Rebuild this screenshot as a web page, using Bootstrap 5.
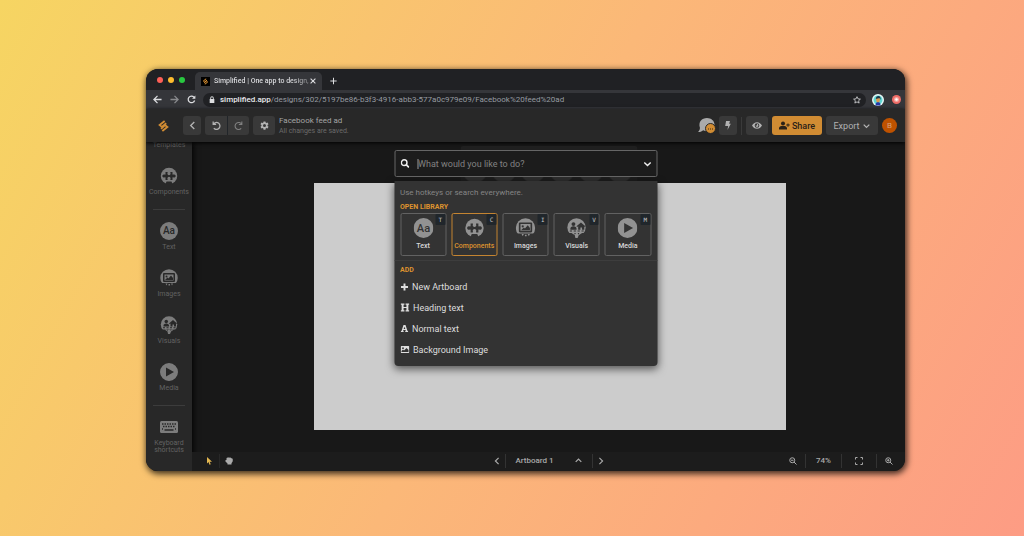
<!DOCTYPE html>
<html lang="en">
<head>
<meta charset="utf-8">
<meta name="viewport" content="width=device-width, initial-scale=1">
<title>Simplified | One app to design</title>
<link href="https://cdn.jsdelivr.net/npm/bootstrap@5.3.0/dist/css/bootstrap.min.css" rel="stylesheet">
<style>
  body { font-family: Roboto, "Liberation Sans", sans-serif; font-size: 8px; line-height: 10px; color: #a8a8a8;
    min-height: 100vh; padding: 69px 119px 66px 146px;
    background: linear-gradient(118deg, #f6d562 0%, #fbb878 50%, #fd9c84 100%); }
  svg { display: block; fill: currentColor; flex: none; }
  button { border: 0; padding: 0; background: none; color: inherit; font: inherit; display: flex; align-items: center; justify-content: center; }
  .browser { background: #181818; border-radius: 12px; box-shadow: 1px 2px 6px 1px rgba(0,0,0,.75); }
  .browser-clip { border-radius: 12px; overflow: hidden; }
  .tabs { background: #202124; height: 21px; padding-left: 11px; color: #dcdde0; }
  .dot { width: 6px; height: 6px; border-radius: 50%; margin-right: 5px; }
  .site-tab { background: #35363a; height: 18px; width: 127px; border-radius: 5px 5px 0 0; margin-left: 5px; padding: 0 6px; font-size: 7px; font-weight: 500; }
  .site-tab .tab-title { margin-left: 4px; white-space: nowrap; background: linear-gradient(90deg, #e4e5e8 80%, #77787b 100%); -webkit-background-clip: text; background-clip: text; color: transparent; }
  .address-row { background: #35363a; height: 19px; padding: 0 4px 0 7px; color: #dcdde0; }
  .address { background: #202124; height: 14px; border-radius: 7px; margin: 0 6px 0 7px; padding: 0 5px 0 6px; }
  .address input { border: 0; background: none; color: #969ba1; padding: 0; outline: 0; }
  .address .host { color: #e8eaed; font-weight: 500; padding-left: 5px; }
  .topbar { background: #282828; height: 33px; padding: 0 8px 0 12px; position: relative; box-shadow: 0 1px 4px #000; z-index: 1; }
  .tool { background: #393939; height: 19px; border-radius: 3px; color: #b2b2b2; }
  .brand-gap { margin-left: 14px; }
  .w18 { width: 18px; } .w22 { width: 22px; }
  .vline { width: 1px; height: 18px; background: #3a3a3a; }
  .doc-title { font-size: 8px; color: #a4a4a4; }
  .doc-note { font-size: 7px; color: #6b6b6b; }
  .share { background: #d18c33; color: #2a2118; width: 50px; font-size: 9px; font-weight: 500; gap: 2px; }
  .export { width: 52px; font-size: 9px; gap: 4px; }
  .avatar { width: 15px; height: 15px; border-radius: 50%; background: #bf5200; color: #d8a27c; }
  .chat-badge { position: absolute; right: -1px; bottom: -1px; width: 11px; height: 11px; border-radius: 50%; background: #d18c33; color: #3b2810; border: 1px solid #282828; }
  .side { width: 46px; background: #282828; box-shadow: 1px 0 6px #000; gap: 18px; padding-bottom: 17px; --cut: #282828; }
  .side a { color: #7c7c7c; text-decoration: none; display: flex; flex-direction: column; align-items: center; gap: 4px; font-size: 7px; line-height: 7px; text-align: center; }
  .side a span { color: #626262; }
  .side hr { width: 32px; margin: -5px 0 -6px; border-color: #777; }
  .stage { padding: 41px 119px 22px 122px; }
  .artboard { background: #ccc; min-height: 247px; }
  .bottombar { background: #1c1c1c; height: 19px; display: grid; grid-template-columns: 1fr auto 1fr; align-items: center; padding: 0 12px 2px 13px; color: #aaa; font-weight: 500; }
  .bottombar .vline { height: 14px; background: #333; }
  .gap-tight { gap: 5px; }
  .page-name { padding: 0 6px 0 5px; gap: 21px; }
  .zoom-group { gap: 8px; }
  .zoom-group .roomy { padding: 0 5px; }
  .zoom-group .zoom-value { padding: 0 2px; }
  .palette { position: absolute; top: 81px; left: 50%; width: 263px; transform: translateX(-50%); z-index: 3; --cut: #333; }
  .ghost { position: absolute; top: -4px; left: 66px; right: 20px; height: 38px; border-radius: 3px; z-index: -1;
    background: radial-gradient(circle at 50% 0, #2d2d2d 12px, #1c1c1c 13px) 0 24px / 29px 16px repeat-x, #1f1f1f; }
  .search { background: #1c1c1c; border: 1px solid #666; border-radius: 2px; height: 27px; margin-bottom: 4px; padding: 0 5px; color: #eee; }
  .search input { background: none; border: 0; outline: 0; padding: 0; margin-left: 10px; color: #ddd; font-size: 9px; line-height: 12px; }
  .search input::placeholder { color: #828282; opacity: 1; }
  .caret-line { width: 1px; height: 10px; background: #999; margin: 0 -10px 0 8px; }
  .panel { background: #333; border-radius: 0 0 4px 4px; box-shadow: 0 3px 8px rgba(0,0,0,.6); padding: 7px 6px 6px; }
  .hint { color: #858585; margin: 0 0 5px; }
  .group-name { color: #dd922f; font-size: 7px; line-height: 8px; font-weight: 700; margin: 0 0 2px; }
  .tiles { display: grid; grid-template-columns: repeat(5, 1fr); gap: 5px; }
  .tile { position: relative; height: 43px; border: 1px solid #626262; border-radius: 2px; flex-direction: column; gap: 4px; color: #d8d8d8; font-size: 7px; line-height: 9px; font-weight: 500; }
  .tile svg { color: #929292; }
  .tile.picked { border: 1px solid #c48431; color: #dd922f; }
  .tile kbd { position: absolute; top: 0; right: 0; background: #20262b; color: #c8c8c8; font: 6px/11px "DejaVu Sans Mono", monospace; padding: 0 3px; border-radius: 1px; }
  .dotted { border-top: 1px dotted #484848; margin: 4px -6px 5px; }
  .cmd { height: 21px; gap: 4px; justify-content: flex-start; color: #dedede; font-size: 9px; width: 100%; }
</style>
</head>
<body class="d-flex flex-column">
<svg width="0" height="0" class="position-absolute" aria-hidden="true">
  <symbol id="i-logo" viewBox="0 0 24 28"><path d="M14.500 3 3.500 12l5 4 9.500-8M6.500 20l9-8 5 4-11 9" fill="none" stroke="currentColor" stroke-width="4"/></symbol>
  <symbol id="i-left" viewBox="0 0 10 10"><path d="M7 1 3 5l4 4" fill="none" stroke="currentColor" stroke-width="1.500"/></symbol>
  <symbol id="i-right" viewBox="0 0 10 10"><path d="m3 1 4 4-4 4" fill="none" stroke="currentColor" stroke-width="1.400"/></symbol>
  <symbol id="i-down" viewBox="0 0 10 10"><path d="m1 3 4 4 4-4" fill="none" stroke="currentColor" stroke-width="1.800"/></symbol>
  <symbol id="i-up" viewBox="0 0 10 10"><path d="m1 7 4-4 4 4" fill="none" stroke="currentColor" stroke-width="1.800"/></symbol>
  <symbol id="i-arrow" viewBox="0 0 10 10"><path d="M9.500 5H1M5 1 1 5l4 4" fill="none" stroke="currentColor" stroke-width="1.400"/></symbol>
  <symbol id="i-reload" viewBox="0 0 10 10"><path d="M8.500 6.200A3.700 3.700 0 1 1 7.700 2.300L8.500 3" fill="none" stroke="currentColor" stroke-width="1.400"/><path d="M9.300.5v3.700H5.600z"/></symbol>
  <symbol id="i-undo" viewBox="0 0 10 10"><path d="M1.300.5v3.300h3.300M1.500 3.600A3.900 3.900 0 1 1 2 8.100" fill="none" stroke="currentColor" stroke-width="1.400"/></symbol>
  <symbol id="i-redo" viewBox="0 0 10 10"><path d="M8.700.5v3.300H5.400M8.500 3.600A3.900 3.900 0 1 0 8 8.100" fill="none" stroke="currentColor" stroke-width="1.200"/></symbol>
  <symbol id="i-gear" viewBox="0 0 24 24"><path fill-rule="evenodd" d="M9.500 1h5l.6 3.300 2 1.100 3.100-1.200 2.500 4.300-2.500 2.100v2.800l2.500 2.100-2.500 4.300-3.100-1.200-2 1.100-.6 3.300h-5l-.6-3.300-2-1.100-3.100 1.200-2.500-4.300 2.500-2.100v-2.800L1.300 8.500l2.500-4.300 3.100 1.200 2-1.100zM12 8a4 4 0 1 0 0 8 4 4 0 0 0 0-8z"/></symbol>
  <symbol id="i-chat" viewBox="0 0 18 16"><path d="M9.500 0C14 0 17.500 3 17.500 7S14 14 9.500 14c-1.500 0-2.800-.3-4-.9C4 14.500 2 15 0 15c1.300-1.300 2-2.800 2-4.500C0 4 4 0 9.500 0z"/></symbol>
  <symbol id="i-bolt" viewBox="0 0 10 16"><path d="M1.500 0h7L7 5h3L4 16l1.300-7H0z"/></symbol>
  <symbol id="i-eye" viewBox="0 0 18 12"><path fill-rule="evenodd" d="M9 0c4 0 7 2.500 9 6-2 3.500-5 6-9 6S2 9.500 0 6c2-3.500 5-6 9-6zm0 1.800a4.200 4.200 0 1 0 0 8.400 4.200 4.200 0 0 0 0-8.400zM9 3.500A2.500 2.500 0 1 1 6.500 6L9 6z"/></symbol>
  <symbol id="i-userplus" viewBox="0 0 22 16"><circle cx="8" cy="4" r="4"/><path d="M0 16v-2c0-3 2-5 5-5h6c3 0 5 2 5 5v2zM17 4h2v2h2.500v2H19v2.500h-2V8h-2.500V6H17z"/></symbol>
  <symbol id="i-lock" viewBox="0 0 10 12"><path fill-rule="evenodd" d="M1 5h1V3.500a3 3 0 0 1 6 0V5h1v7H1zm2.500 0h3V3.500a1.500 1.500 0 0 0-3 0z"/></symbol>
  <symbol id="i-star" viewBox="0 0 12 12"><path d="m6 1 1.500 3.300 3.600.4-2.700 2.400.8 3.500L6 8.800l-3.200 1.800.8-3.500L.9 4.700l3.600-.4z" fill="none" stroke="currentColor" stroke-width="1.200"/></symbol>
  <symbol id="i-comp" viewBox="0 0 36 36"><circle cx="18" cy="18" r="16.500"/><g style="fill:var(--cut)"><path d="M10 36l3-7h10l3 7z"/><path d="M11 10h3.500c1 0 1 1 .5 2a3.200 3.200 0 1 0 6 0c-.5-1-.5-2 .5-2H25v4.500c0 1 1 1 2 .5a3.200 3.200 0 1 1 0 6c-1-.5-2-.5-2 .5V26h-3.500c-1 0-1-1-.5-2a3.200 3.200 0 1 0-6 0c.5 1 .5 2-.5 2H11v-4.500c0-1-1-1-2-.5a3.200 3.200 0 1 1 0-6c1 .5 2 .5 2-.5z"/></g></symbol>
  <symbol id="i-text" viewBox="0 0 36 36"><circle cx="18" cy="18" r="18"/><text x="18" y="24.500" text-anchor="middle" font-family="Roboto, sans-serif" font-weight="500" font-size="20" style="fill:var(--cut)">Aa</text></symbol>
  <symbol id="i-img" viewBox="0 0 36 36"><circle cx="18" cy="18" r="17.500"/><g style="fill:var(--cut)"><path fill-rule="evenodd" d="M8 8h20q2 0 2 2v14q0 2-2 2H8q-2 0-2-2V10q0-2 2-2zm1 3v12h18V11z"/><circle cx="13" cy="15" r="2"/><path d="m10 22 5-5 2 2 5-6 4 5v4zM3 28h30v8H3z"/></g><path d="M11 29h4l-2 4zM17 30h3v3h-3zM22 29h4l-2 4z"/></symbol>
  <symbol id="i-vis" viewBox="0 0 36 36"><circle cx="18" cy="17" r="16.500"/><g style="fill:var(--cut)"><path d="M7 21v-2c0-2 2-4 5.500-4s5.500 2 5.500 4v2zM18 15l8-7 8 7-1 1-1-1v6h-4v-4h-3v4h-4v-6l-2 1z"/><circle cx="12.500" cy="11" r="3.500"/><path d="M3 27h30v9H3z"/></g><path d="M6 23.500h26" style="stroke:var(--cut)" stroke-width="2" stroke-dasharray="4 3"/><path d="M9 27h5l1 3 2-3h3l2 3 1-3h5l-6 4-2 5h-4l-1-5z"/></symbol>
  <symbol id="i-play" viewBox="0 0 36 36"><path fill-rule="evenodd" d="M18 0a18 18 0 1 1 0 36 18 18 0 0 1 0-36zm-6 9v18l16-9z"/></symbol>
  <symbol id="i-keys" viewBox="0 0 36 24"><rect width="36" height="24" rx="3"/><path d="M4 6h28M6 11h24M4 16h2m24 0h2" stroke="#282828" stroke-width="3" stroke-dasharray="3 2"/><path d="M9 18h18" stroke="#282828" stroke-width="3"/></symbol>
  <symbol id="i-search" viewBox="0 0 16 16"><circle cx="6.500" cy="6.500" r="5" fill="none" stroke="currentColor" stroke-width="2.600"/><path d="m10 10 5 5" stroke="currentColor" stroke-width="3"/></symbol>
  <symbol id="i-zoomout" viewBox="0 0 16 16"><circle cx="6.500" cy="6.500" r="5" fill="none" stroke="currentColor" stroke-width="2"/><path d="m10 10 5 5M4 6.500h5" stroke="currentColor" stroke-width="2"/></symbol>
  <symbol id="i-zoomin" viewBox="0 0 16 16"><circle cx="6.500" cy="6.500" r="5" fill="none" stroke="currentColor" stroke-width="2"/><path d="m10 10 5 5M4 6.500h5M6.500 4v5" stroke="currentColor" stroke-width="2"/></symbol>
  <symbol id="i-full" viewBox="0 0 16 16"><path d="M1 5V1h4M11 1h4v4M15 11v4h-4M5 15H1v-4" fill="none" stroke="currentColor" stroke-width="2"/></symbol>
  <symbol id="i-plus" viewBox="0 0 10 10"><path d="M5 .5v9M.5 5h9" stroke="currentColor" stroke-width="2.400"/></symbol>
  <symbol id="i-thinplus" viewBox="0 0 10 10"><path d="M5 .5v9M.5 5h9" stroke="currentColor" stroke-width="1.500"/></symbol>
  <symbol id="i-x" viewBox="0 0 10 10"><path d="m1 1 8 8M9 1 1 9" stroke="currentColor" stroke-width="1.800"/></symbol>
  <symbol id="i-head" viewBox="0 0 16 16"><path d="M0 1h7v2H5.500v4h5V3H9V1h7v2h-2v10h2v2H9v-2h1.500V9h-5v4H7v2H0v-2h2V3H0z"/></symbol>
  <symbol id="i-a" viewBox="0 0 16 16"><path fill-rule="evenodd" d="M6 1h4L14 13h1.500v2H9.500v-2h1l-.5-2H5.800L5.300 13h1v2H.5v-2H2zM8 4.500 6.300 9h3.400z"/></symbol>
  <symbol id="i-pic" viewBox="0 0 18 14"><path fill-rule="evenodd" d="M2 0h14q2 0 2 2v10q0 2-2 2H2q-2 0-2-2V2q0-2 2-2zm0 12h14V8l-4-4-5 5-2-2-3 3zM5 2.500a1.800 1.800 0 1 0 0 3.600 1.800 1.800 0 0 0 0-3.600z"/></symbol>
  <symbol id="i-cursor" viewBox="0 0 10 16"><path d="M0 0v13l3-3 2 5.500 2.500-1L5.300 9.500H10z"/></symbol>
  <symbol id="i-hand" viewBox="0 0 16 16"><path d="M3 2.500Q4.500 0 6 1.500 8-.5 9.500 1.500q2-1 3 1 2.500-.5 3 2v4l-2.500 4V15H5v-2L1 9q-1.500-3 2-3z"/></symbol>
</svg>

<div class="browser position-relative flex-fill d-flex">
 <div class="browser-clip d-flex flex-column flex-fill">
  <div class="tabs d-flex align-items-end">
    <div class="d-flex align-self-center"><span class="dot" style="background:#fe5f57"></span><span class="dot" style="background:#febc2e"></span><span class="dot" style="background:#28c840"></span></div>
    <div class="site-tab d-flex align-items-center">
      <svg width="9" height="9" viewBox="0 0 9 9" style="color:#e89a34"><rect width="9" height="9" fill="#000"/><use href="#i-logo" x="1" y="1" width="7" height="7"/></svg>
      <span class="tab-title">Simplified | One app to design,</span>
      <button type="button" class="ms-auto" aria-label="Close tab"><svg width="6" height="6"><use href="#i-x"/></svg></button>
    </div>
    <button type="button" class="ms-2 mb-1" aria-label="New tab"><svg width="7" height="10"><use href="#i-thinplus"/></svg></button>
  </div>

  <div class="address-row d-flex align-items-center">
    <button type="button" aria-label="Back"><svg width="9" height="9"><use href="#i-arrow"/></svg></button>
    <button type="button" class="ms-2 opacity-50" aria-label="Forward"><svg width="9" height="9" viewBox="0 0 10 10"><path d="M.5 5H9M5 1l4 4-4 4" fill="none" stroke="currentColor" stroke-width="1.400"/></svg></button>
    <button type="button" class="ms-2" aria-label="Reload"><svg width="9" height="9"><use href="#i-reload"/></svg></button>
    <div class="address d-flex align-items-center flex-fill">
      <svg width="6" height="7"><use href="#i-lock"/></svg>
      <label for="url" class="host">simplified.app</label>
      <input id="url" type="text" class="flex-fill" value="/designs/302/5197be86-b3f3-4916-abb3-577a0c979e09/Facebook%20feed%20ad">
      <button type="button" aria-label="Bookmark"><svg width="8" height="8"><use href="#i-star"/></svg></button>
    </div>
    <svg width="12" height="12" viewBox="0 0 12 12"><circle cx="6" cy="6" r="6" fill="#e8f7f6"/><circle cx="6" cy="6" r="4.500" fill="#5fd4d0"/><path d="M3.500 11.500Q3.500 8 6 8t2.500 3.500z" fill="#2438a8"/><ellipse cx="6" cy="5.500" rx="2" ry="2.700" fill="#d99a52"/><path d="M3.800 5Q4 2 6.500 2t2 4L7.500 4z" fill="#17364d"/></svg>
    <svg class="ms-2" width="9" height="9" viewBox="0 0 9 9"><circle cx="4.500" cy="4.500" r="4.500" fill="#ee6c67"/><circle cx="4.500" cy="4.500" r="2.500" fill="#f4aaa3"/><circle cx="4.500" cy="4.500" r="1.200" fill="#fff"/></svg>
  </div>

  <header class="topbar d-flex align-items-center">
    <svg width="11" height="14" style="color:#d18c33"><use href="#i-logo"/></svg>
    <button type="button" class="tool w18 brand-gap" aria-label="Back to projects"><svg width="9" height="9"><use href="#i-left"/></svg></button>
    <div class="d-flex ms-1">
      <button type="button" class="tool w22 rounded-end-0" aria-label="Undo"><svg width="9" height="9"><use href="#i-undo"/></svg></button>
      <button type="button" class="tool w22 rounded-start-0 border-start border-dark" aria-label="Redo"><svg width="9" height="9" opacity=".6"><use href="#i-redo"/></svg></button>
    </div>
    <button type="button" class="tool w22 ms-1" aria-label="Settings"><svg width="9" height="9"><use href="#i-gear"/></svg></button>
    <div class="ms-1"><div class="doc-title">Facebook feed ad</div><div class="doc-note">All changes are saved.</div></div>
    <div class="d-flex align-items-center gap-1 ms-auto">
      <button type="button" class="position-relative" aria-label="Comments"><svg width="17" height="15" style="color:#aaa"><use href="#i-chat"/></svg><span class="chat-badge d-flex align-items-center justify-content-center"><svg width="6" height="2" viewBox="0 0 6 2"><path d="M0 1h6" stroke="currentColor" stroke-dasharray="1 1"/></svg></span></button>
      <button type="button" class="tool w18" aria-label="Quick actions"><svg width="6" height="9"><use href="#i-bolt"/></svg></button>
      <span class="vline"></span>
      <button type="button" class="tool w22" aria-label="Preview"><svg width="10" height="7"><use href="#i-eye"/></svg></button>
      <button type="button" class="tool share"><svg width="11" height="9"><use href="#i-userplus"/></svg>Share</button>
      <button type="button" class="tool export">Export<svg width="7" height="8"><use href="#i-down"/></svg></button>
      <button type="button" class="avatar" aria-label="Account">B</button>
    </div>
  </header>

  <div class="d-flex flex-fill">
    <nav class="side d-flex flex-column align-items-center">
      <a href="#"><span>Templates</span></a>
      <a href="#"><svg width="18" height="18"><use href="#i-comp"/></svg><span>Components</span></a>
      <hr>
      <a href="#"><svg width="18" height="18"><use href="#i-text"/></svg><span>Text</span></a>
      <a href="#"><svg width="18" height="18"><use href="#i-img"/></svg><span>Images</span></a>
      <a href="#"><svg width="18" height="18"><use href="#i-vis"/></svg><span>Visuals</span></a>
      <a href="#"><svg width="18" height="18"><use href="#i-play"/></svg><span>Media</span></a>
      <hr>
      <a href="#"><svg width="18" height="18"><use href="#i-keys"/></svg><span>Keyboard<br>shortcuts</span></a>
    </nav>
    <main class="flex-fill d-flex flex-column">
      <div class="stage flex-fill d-flex"><div class="artboard flex-fill"></div></div>
      <footer class="bottombar">
        <div class="d-flex align-items-center gap-tight">
          <button type="button" aria-label="Select" style="color:#e3b750"><svg width="9" height="8"><use href="#i-cursor"/></svg></button>
          <span class="vline opacity-50"></span>
          <button type="button" aria-label="Pan"><svg width="8" height="8"><use href="#i-hand"/></svg></button>
        </div>
        <div class="d-flex align-items-center gap-1">
          <button type="button" aria-label="Previous artboard"><svg width="8" height="8"><use href="#i-left"/></svg></button>
          <span class="vline"></span>
          <div class="d-flex"><button type="button" class="page-name">Artboard 1<svg width="7" height="7"><use href="#i-up"/></svg></button></div>
          <span class="vline"></span>
          <button type="button" aria-label="Next artboard"><svg width="8" height="8"><use href="#i-right"/></svg></button>
        </div>
        <div class="zoom-group d-flex align-items-center justify-content-end">
          <button type="button" aria-label="Zoom out"><svg width="8" height="8"><use href="#i-zoomout"/></svg></button>
          <span class="vline"></span><span class="zoom-value">74%</span><span class="vline"></span>
          <button type="button" class="roomy" aria-label="Fit"><svg width="8" height="8"><use href="#i-full"/></svg></button>
          <span class="vline"></span>
          <button type="button" aria-label="Zoom in"><svg width="8" height="8"><use href="#i-zoomin"/></svg></button>
        </div>
      </footer>
    </main>
  </div>
 </div>

  <div class="palette">
    <div class="ghost"></div>
    <div class="search d-flex align-items-center">
      <svg width="9" height="9"><use href="#i-search"/></svg>
      <span class="caret-line"></span>
      <input type="text" class="flex-fill" placeholder="What would you like to do?" aria-label="What would you like to do?">
      <button type="button" aria-label="Show commands"><svg width="8" height="8"><use href="#i-down"/></svg></button>
    </div>
    <div class="panel">
      <p class="hint">Use hotkeys or search everywhere.</p>
      <h2 class="group-name">OPEN LIBRARY</h2>
      <div class="tiles">
        <button type="button" class="tile"><svg width="20" height="20"><use href="#i-text"/></svg>Text<kbd>T</kbd></button>
        <button type="button" class="tile picked"><svg width="20" height="20"><use href="#i-comp"/></svg>Components<kbd>C</kbd></button>
        <button type="button" class="tile"><svg width="20" height="20"><use href="#i-img"/></svg>Images<kbd>I</kbd></button>
        <button type="button" class="tile"><svg width="20" height="20"><use href="#i-vis"/></svg>Visuals<kbd>V</kbd></button>
        <button type="button" class="tile"><svg width="20" height="20"><use href="#i-play"/></svg>Media<kbd>M</kbd></button>
      </div>
      <div class="dotted"></div>
      <h2 class="group-name">ADD</h2>
      <button type="button" class="cmd"><svg width="8" height="8"><use href="#i-plus"/></svg>New Artboard</button>
      <button type="button" class="cmd"><svg width="9" height="9"><use href="#i-head"/></svg>Heading text</button>
      <button type="button" class="cmd"><svg width="8" height="9"><use href="#i-a"/></svg>Normal text</button>
      <button type="button" class="cmd"><svg width="9" height="7"><use href="#i-pic"/></svg>Background Image</button>
    </div>
  </div>
</div>
<script src="https://cdn.jsdelivr.net/npm/bootstrap@5.3.0/dist/js/bootstrap.bundle.min.js"></script>
</body>
</html>
